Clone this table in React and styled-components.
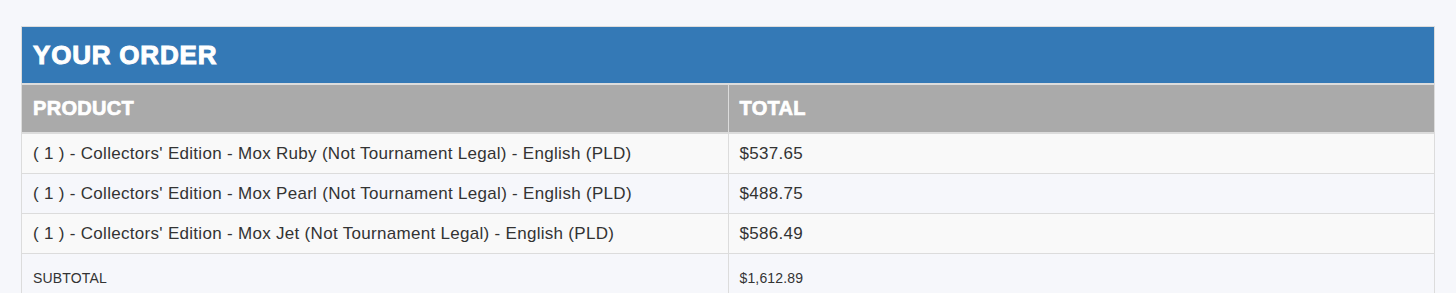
import React from "react";
import styled, { createGlobalStyle } from "styled-components";

const GlobalStyle = createGlobalStyle`
  body {
    margin: 0;
    background: #f6f7fb;
    font-family: "Liberation Sans", Arial, sans-serif;
    color: #333;
  }
`;

const items = [
  { name: "( 1 ) - Collectors' Edition - Mox Ruby (Not Tournament Legal) - English (PLD)", total: "$537.65" },
  { name: "( 1 ) - Collectors' Edition - Mox Pearl (Not Tournament Legal) - English (PLD)", total: "$488.75" },
  { name: "( 1 ) - Collectors' Edition - Mox Jet (Not Tournament Legal) - English (PLD)", total: "$586.49" },
];

function App() {
  return (
    <Page>
      <GlobalStyle />
      <OrderBox>
        <Title>YOUR ORDER</Title>
        <Table>
          <thead>
            <tr>
              <HeadCell>PRODUCT</HeadCell>
              <HeadCell>TOTAL</HeadCell>
            </tr>
          </thead>
          <tbody>
            {items.map((item, i) => (
              <Row key={i} $striped={i % 2 === 0}>
                <Cell>{item.name}</Cell>
                <Cell>{item.total}</Cell>
              </Row>
            ))}
            <Row>
              <Cell $small>SUBTOTAL</Cell>
              <Cell $small>$1,612.89</Cell>
            </Row>
          </tbody>
        </Table>
      </OrderBox>
    </Page>
  );
}

export default App;

const Page = styled.div`
  padding: 26px 21px 0 21px;
`;
const OrderBox = styled.div`
  border: 1px solid #dcdcdc;
  border-bottom: none;
`;
const Title = styled.h2`
  margin: 0;
  height: 56px;
  display: flex;
  align-items: center;
  padding: 0 11px;
  background: #3479b6;
  color: #fff;
  font-size: 26px;
  font-weight: bold;
  letter-spacing: 0.8px;
  -webkit-text-stroke: 1px #fff;
`;
const Table = styled.table`
  width: 100%;
  border-collapse: collapse;
  table-layout: fixed;
`;
const HeadCell = styled.th`
  height: 47px;
  padding: 0 11px;
  text-align: left;
  background: #aaaaaa;
  color: #fff;
  font-size: 20px;
  font-weight: bold;
  letter-spacing: 0.3px;
  -webkit-text-stroke: 0.7px #fff;
  border-top: 2px solid #dcdcdc;
  border-bottom: 2px solid #dcdcdc;
  & + & {
    border-left: 1px solid #dcdcdc;
  }
`;
const Row = styled.tr`
  background: ${(p) => (p.$striped ? "#f9f9f9" : "#f6f7fb")};
`;
const Cell = styled.td`
  height: 39px;
  padding: ${(p) => (p.$small ? "4px 11px 0" : "0 11px")};
  font-size: ${(p) => (p.$small ? "14px" : "17px")};
  letter-spacing: ${(p) => (p.$small ? "0.15px" : "0.3px")};
  color: #333;
  border-top: 1px solid #dcdcdc;
  vertical-align: middle;
  & + & {
    border-left: 1px solid #dcdcdc;
  }
`;
